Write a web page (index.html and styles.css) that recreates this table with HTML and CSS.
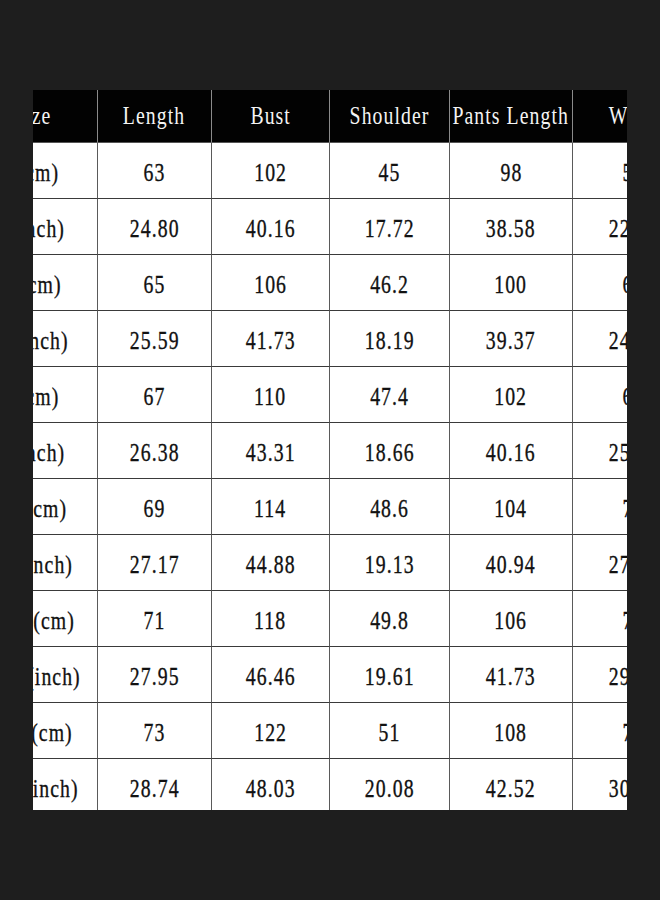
FILE: index.html
```html
<!DOCTYPE html>
<html lang="en">
<head>
<meta charset="utf-8">
<title>Size chart</title>
<link rel="stylesheet" href="styles.css">
</head>
<body>
<div class="frame">
  <div class="chart">
    <div class="cell head"><span>Size</span></div>
    <div class="cell head"><span>Length</span></div>
    <div class="cell head"><span>Bust</span></div>
    <div class="cell head"><span>Shoulder</span></div>
    <div class="cell head"><span>Pants Length</span></div>
    <div class="cell head"><span>Waist</span></div>

    <div class="cell"><span>S(cm)</span></div><div class="cell"><span>63</span></div><div class="cell"><span>102</span></div><div class="cell"><span>45</span></div><div class="cell"><span>98</span></div><div class="cell"><span>58</span></div>
    <div class="cell"><span>S(inch)</span></div><div class="cell"><span>24.80</span></div><div class="cell"><span>40.16</span></div><div class="cell"><span>17.72</span></div><div class="cell"><span>38.58</span></div><div class="cell"><span>22.83</span></div>
    <div class="cell"><span>M(cm)</span></div><div class="cell"><span>65</span></div><div class="cell"><span>106</span></div><div class="cell"><span>46.2</span></div><div class="cell"><span>100</span></div><div class="cell"><span>62</span></div>
    <div class="cell"><span>M(inch)</span></div><div class="cell"><span>25.59</span></div><div class="cell"><span>41.73</span></div><div class="cell"><span>18.19</span></div><div class="cell"><span>39.37</span></div><div class="cell"><span>24.41</span></div>
    <div class="cell"><span>L(cm)</span></div><div class="cell"><span>67</span></div><div class="cell"><span>110</span></div><div class="cell"><span>47.4</span></div><div class="cell"><span>102</span></div><div class="cell"><span>66</span></div>
    <div class="cell"><span>L(inch)</span></div><div class="cell"><span>26.38</span></div><div class="cell"><span>43.31</span></div><div class="cell"><span>18.66</span></div><div class="cell"><span>40.16</span></div><div class="cell"><span>25.98</span></div>
    <div class="cell"><span>XL(cm)</span></div><div class="cell"><span>69</span></div><div class="cell"><span>114</span></div><div class="cell"><span>48.6</span></div><div class="cell"><span>104</span></div><div class="cell"><span>70</span></div>
    <div class="cell"><span>XL(inch)</span></div><div class="cell"><span>27.17</span></div><div class="cell"><span>44.88</span></div><div class="cell"><span>19.13</span></div><div class="cell"><span>40.94</span></div><div class="cell"><span>27.56</span></div>
    <div class="cell"><span>XXL(cm)</span></div><div class="cell"><span>71</span></div><div class="cell"><span>118</span></div><div class="cell"><span>49.8</span></div><div class="cell"><span>106</span></div><div class="cell"><span>74</span></div>
    <div class="cell"><span>XXL(inch)</span></div><div class="cell"><span>27.95</span></div><div class="cell"><span>46.46</span></div><div class="cell"><span>19.61</span></div><div class="cell"><span>41.73</span></div><div class="cell"><span>29.13</span></div>
    <div class="cell"><span>3XL(cm)</span></div><div class="cell"><span>73</span></div><div class="cell"><span>122</span></div><div class="cell"><span>51</span></div><div class="cell"><span>108</span></div><div class="cell"><span>78</span></div>
    <div class="cell"><span>3XL(inch)</span></div><div class="cell"><span>28.74</span></div><div class="cell"><span>48.03</span></div><div class="cell"><span>20.08</span></div><div class="cell"><span>42.52</span></div><div class="cell"><span>30.71</span></div>
  </div>
</div>
</body>
</html>
```
FILE: styles.css
```css
html, body {
  margin: 0;
  padding: 0;
  background: #1e1e1e;
}
body {
  width: 660px;
  height: 900px;
  padding: 90px 0 0 33px;
  box-sizing: border-box;
}
.frame {
  width: 594px;
  height: 720px;
  overflow: hidden;
  background: #fff;
}
.chart {
  display: grid;
  grid-template-columns: 131px 114px 118px 120px 123px 122px;
  grid-template-rows: 53px repeat(12, 56px);
  margin-left: -66px;
  width: max-content;
  font-family: "Liberation Serif", "Times New Roman", serif;
  font-size: 26px;
  color: #111;
}
.cell {
  display: flex;
  align-items: center;
  justify-content: center;
  box-sizing: border-box;
  border-right: 1px solid #5a5a5a;
  border-bottom: 1px solid #3a3a3a;
  background: #fff;
  padding-top: 4px;
}
.cell span {
  display: inline-block;
  white-space: nowrap;
  letter-spacing: 1.4px;
  transform: scaleX(0.76);
  -webkit-text-stroke: 0.35px #111;
}
.head {
  background: #020202;
  color: #f4f4f4;
  border-right: 1px solid #8a8a8a;
  border-bottom: 1px solid #555;
  padding-top: 0;
}
.head span {
  letter-spacing: 1.4px;
  -webkit-text-stroke: 0;
}
```
